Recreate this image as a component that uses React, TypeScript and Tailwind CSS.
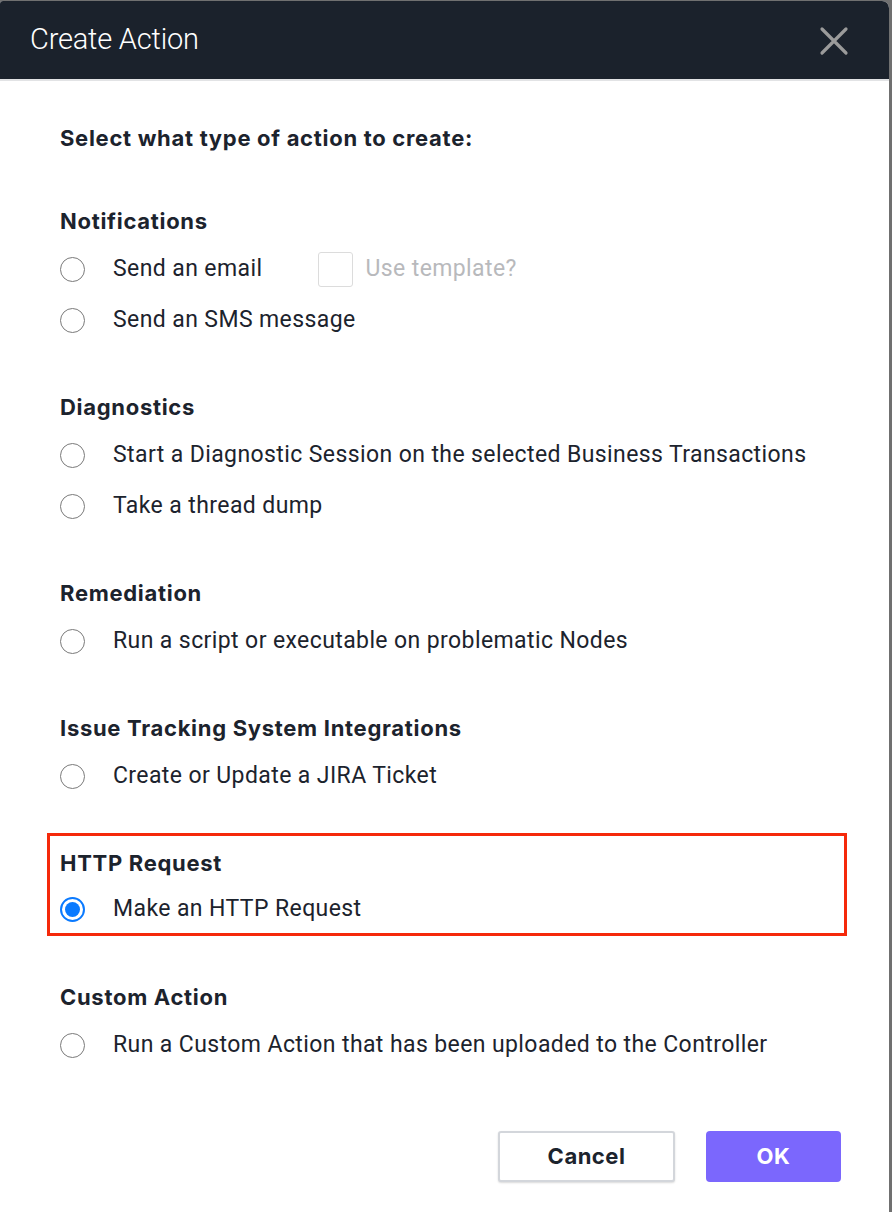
import React from 'react'

const sections = [
    { title: 'Notifications', items: ['Send an email', 'Send an SMS message'] },
    { title: 'Diagnostics', items: ['Start a Diagnostic Session on the selected Business Transactions', 'Take a thread dump'] },
    { title: 'Remediation', items: ['Run a script or executable on problematic Nodes'] },
    { title: 'Issue Tracking System Integrations', items: ['Create or Update a JIRA Ticket'] },
]

const headFont = { fontFamily: 'Inter, "Liberation Sans", sans-serif' }

function Radio({ checked }: { checked?: boolean }) {
    if (checked) {
        return (
            <span className="w-[25px] h-[25px] rounded-full border-2 border-[#0a7aff] flex items-center justify-center shrink-0">
                <span className="w-[15px] h-[15px] rounded-full bg-[#0a7aff]" />
            </span>
        )
    }
    return <span className="w-[25px] h-[25px] rounded-full border-[1.5px] border-[#7a7a7a] bg-white shrink-0" />
}

function Item({ label, checked, extra, h = 'h-[51px]' }: { label: string; checked?: boolean; extra?: React.ReactNode; h?: string }) {
    return (
        <div className={`flex items-center ${h}`}>
            <Radio checked={checked} />
            <span className="ml-[28px] text-[23px] tracking-[0.4px] text-[#1c232d] font-['Roboto']">{label}</span>
            {extra}
        </div>
    )
}

function Heading({ children }: { children: React.ReactNode }) {
    return (
        <div className="h-[34px] mb-[6px] flex items-center text-[22px] font-bold tracking-[0.7px] text-[#1c232d]" style={headFont}>
            {children}
        </div>
    )
}

export default function App() {
    return (
        <div className="h-[1212px] bg-[#707070] pt-px pr-[3px] overflow-hidden">
            <div className="h-full bg-white rounded-tr-[7px] rounded-tl-[3px] overflow-hidden flex flex-col">
                <div className="h-[78px] bg-[#1b222c] flex items-center justify-between pl-[30px] pr-[40px] shrink-0">
                    <span className="text-white text-[29px] font-light font-['Roboto'] tracking-[-0.2px]">Create Action</span>
                    <svg width="30" height="30" viewBox="0 0 30 30" className="mt-[2px]">
                        <path d="M3 3 L27 27 M27 3 L3 27" stroke="#9b9b9b" strokeWidth="3.2" strokeLinecap="round" />
                    </svg>
                </div>
                <div className="h-[2px] bg-[#e2e3e5] shrink-0" />
                <div className="px-[60px] pt-[40px] flex flex-col">
                    <div className="h-[34px] flex items-center text-[22px] font-bold tracking-[0.7px] text-[#1c232d]" style={headFont}>
                        Select what type of action to create:
                    </div>
                    {sections.map((s, si) => (
                        <div key={s.title} className={si === 0 ? 'mt-[49px]' : 'mt-[44px]'}>
                            <Heading>{s.title}</Heading>
                            {s.items.map((it, i) => (
                                <Item
                                    key={it}
                                    label={it}
                                    extra={
                                        si === 0 && i === 0 ? (
                                            <span className="flex items-center ml-[56px]">
                                                <span className="w-[35px] h-[35px] border-[1.5px] border-[#dcdcdc] rounded-[3px]" />
                                                <span className="ml-[12px] text-[23px] tracking-[0.4px] text-[#b8b9bc] font-['Roboto']">Use template?</span>
                                            </span>
                                        ) : null
                                    }
                                />
                            ))}
                        </div>
                    ))}
                    <div className="mt-[31px] -ml-[13px] w-[800px] border-[3px] border-[#f5290a] pl-[10px] pt-[10px]">
                        <Heading>HTTP Request</Heading>
                        <Item label="Make an HTTP Request" checked h="h-[47px]" />
                    </div>
                    <div className="mt-[44px]">
                        <Heading>Custom Action</Heading>
                        <Item label="Run a Custom Action that has been uploaded to the Controller" />
                    </div>
                    <div className="mt-[60px] flex justify-end gap-[31px] -mr-[12px]">
                        <button className="w-[177px] h-[51px] rounded-[3px] border-2 border-[#d3d6db] bg-white shadow-[0_1px_2px_rgba(0,0,0,0.15)] text-[22px] font-bold tracking-[0.5px] text-[#1c232d]" style={headFont}>
                            Cancel
                        </button>
                        <button className="w-[135px] h-[51px] rounded-[4px] bg-[#7b67fd] text-[22px] font-bold tracking-[0.5px] text-white" style={headFont}>
                            OK
                        </button>
                    </div>
                </div>
            </div>
        </div>
    )
}
